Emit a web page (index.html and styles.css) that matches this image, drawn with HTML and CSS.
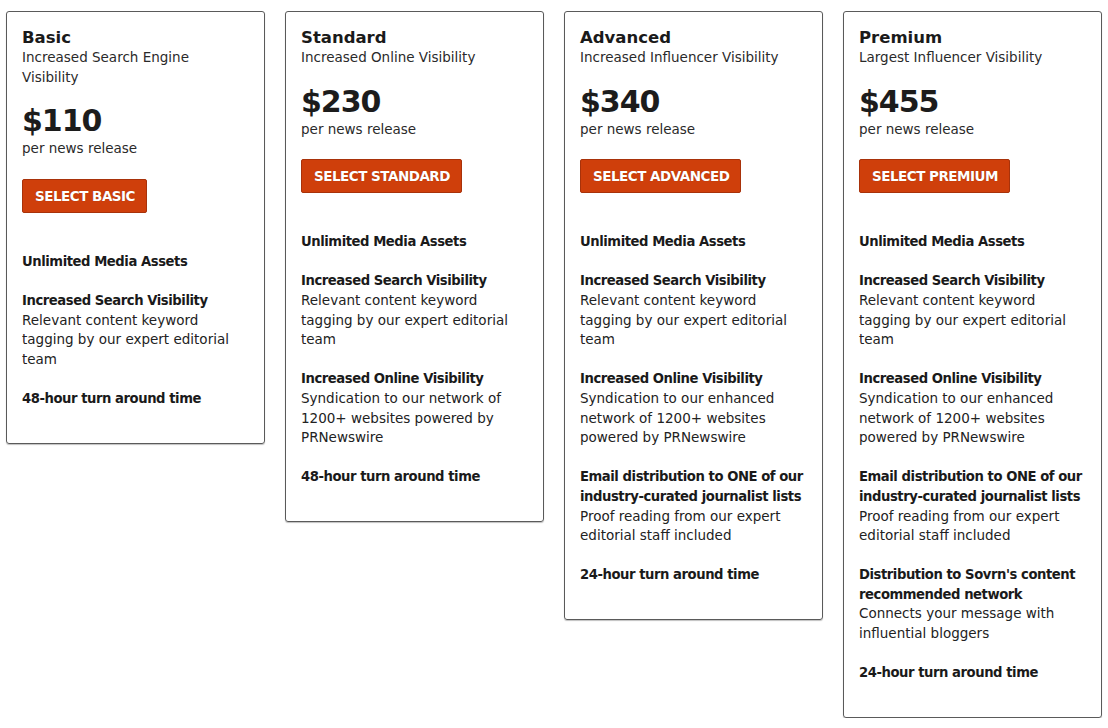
FILE: index.html
```html
<!DOCTYPE html>
<html lang="en">
<head>
<meta charset="utf-8">
<title>Pricing</title>
<link rel="stylesheet" href="styles.css">
</head>
<body>
<div class="plans">
  <div class="card">
    <div class="name">Basic</div>
    <div class="sub">Increased Search Engine<br>Visibility</div>
    <div class="price">$110</div>
    <div class="per">per news release</div>
    <a class="btn">SELECT BASIC</a>
    <div class="features">
      <div class="feat"><b>Unlimited Media Assets</b></div>
      <div class="feat"><b>Increased Search Visibility</b><br>Relevant content keyword<br>tagging by our expert editorial<br>team</div>
      <div class="feat"><b>48-hour turn around time</b></div>
    </div>
  </div>
  <div class="card">
    <div class="name">Standard</div>
    <div class="sub">Increased Online Visibility</div>
    <div class="price">$230</div>
    <div class="per">per news release</div>
    <a class="btn">SELECT STANDARD</a>
    <div class="features">
      <div class="feat"><b>Unlimited Media Assets</b></div>
      <div class="feat"><b>Increased Search Visibility</b><br>Relevant content keyword<br>tagging by our expert editorial<br>team</div>
      <div class="feat"><b>Increased Online Visibility</b><br>Syndication to our network of<br>1200+ websites powered by<br>PRNewswire</div>
      <div class="feat"><b>48-hour turn around time</b></div>
    </div>
  </div>
  <div class="card">
    <div class="name">Advanced</div>
    <div class="sub">Increased Influencer Visibility</div>
    <div class="price">$340</div>
    <div class="per">per news release</div>
    <a class="btn">SELECT ADVANCED</a>
    <div class="features">
      <div class="feat"><b>Unlimited Media Assets</b></div>
      <div class="feat"><b>Increased Search Visibility</b><br>Relevant content keyword<br>tagging by our expert editorial<br>team</div>
      <div class="feat"><b>Increased Online Visibility</b><br>Syndication to our enhanced<br>network of 1200+ websites<br>powered by PRNewswire</div>
      <div class="feat"><b>Email distribution to ONE of our<br>industry-curated journalist lists</b><br>Proof reading from our expert<br>editorial staff included</div>
      <div class="feat"><b>24-hour turn around time</b></div>
    </div>
  </div>
  <div class="card">
    <div class="name">Premium</div>
    <div class="sub">Largest Influencer Visibility</div>
    <div class="price">$455</div>
    <div class="per">per news release</div>
    <a class="btn">SELECT PREMIUM</a>
    <div class="features">
      <div class="feat"><b>Unlimited Media Assets</b></div>
      <div class="feat"><b>Increased Search Visibility</b><br>Relevant content keyword<br>tagging by our expert editorial<br>team</div>
      <div class="feat"><b>Increased Online Visibility</b><br>Syndication to our enhanced<br>network of 1200+ websites<br>powered by PRNewswire</div>
      <div class="feat"><b>Email distribution to ONE of our<br>industry-curated journalist lists</b><br>Proof reading from our expert<br>editorial staff included</div>
      <div class="feat"><b>Distribution to Sovrn's content<br>recommended network</b><br>Connects your message with<br>influential bloggers</div>
      <div class="feat"><b>24-hour turn around time</b></div>
    </div>
  </div>
</div>
</body>
</html>
```

FILE: styles.css
```css
html, body {
  margin: 0;
  padding: 0;
  background: #ffffff;
}
body {
  font-family: "DejaVu Sans", "Liberation Sans", sans-serif;
  color: #222222;
  font-size: 13.5px;
  line-height: 19.6px;
}
.plans {
  display: flex;
  align-items: flex-start;
  gap: 20px;
  padding: 11px 0 0 6px;
}
.card {
  box-sizing: border-box;
  width: 259px;
  border: 1px solid #5a5a5a;
  border-radius: 3px;
  box-shadow: 0 1px 1px rgba(0,0,0,0.25);
  padding: 16px 15px 34px 15px;
  white-space: nowrap;
}
.name {
  font-size: 16.5px;
  font-weight: bold;
  line-height: 20px;
  color: #1a1a1a;
}
.sub {
  color: #2a2a2a;
}
.price {
  margin-top: 16px;
  font-size: 30px;
  font-weight: bold;
  line-height: 36px;
  letter-spacing: -1px;
  color: #1c1c1c;
}
.per {
  color: #2a2a2a;
}
.btn {
  display: inline-block;
  box-sizing: border-box;
  margin-top: 20px;
  height: 34px;
  padding: 0 11px 0 12px;
  line-height: 32px;
  background: #cf3f0b;
  border: 1px solid #a8320a;
  border-radius: 2px;
  color: #ffffff;
  font-weight: bold;
  font-size: 13.5px;
  letter-spacing: -0.5px;
  text-shadow: 0 0 1px rgba(0,0,0,0.3);
}
.features {
  margin-top: 39px;
  display: flex;
  flex-direction: column;
  gap: 19.6px;
}
.feat b {
  color: #1a1a1a;
  font-size: 13.2px;
  letter-spacing: -0.45px;
}
```
